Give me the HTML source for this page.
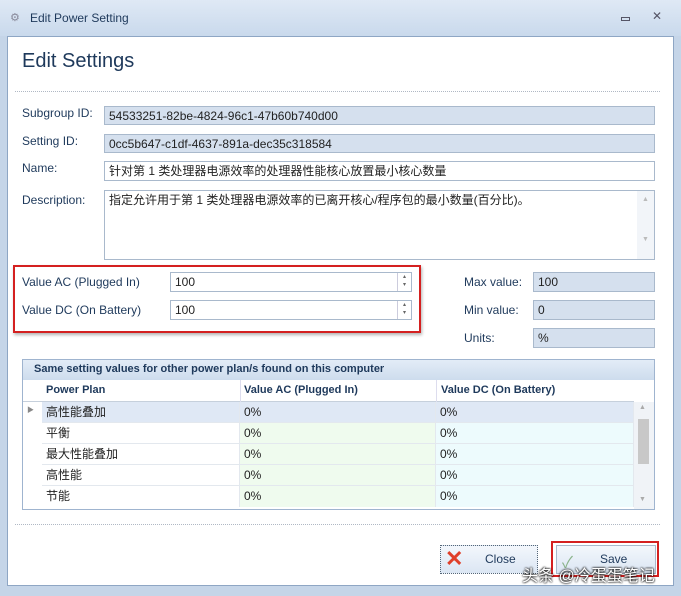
<!DOCTYPE html><html><head><meta charset="utf-8"><style>
*{box-sizing:border-box;margin:0;padding:0}
body{width:681px;height:596px;overflow:hidden;background:#c5d5e8;font-family:"Liberation Sans","Noto Sans CJK SC",sans-serif;font-size:12px;color:#1e395b;position:relative}
.a{position:absolute}
.f{position:absolute;border:1px solid #a9b9cc;padding:2px 4px;font-size:12px;color:#222;line-height:14px}
.g{background:#d5e0ee}
.w{background:#fff}
.l{position:absolute;color:#1e395b;font-size:12px}
.c{position:absolute;height:21px;line-height:21px;border-bottom:1px solid #e3e8ee;border-right:1px solid #e3e8ee;padding-left:4px;color:#222;font-size:12px}
</style></head><body>
<div class="a" style="left:0;top:0;width:681px;height:36px;background:linear-gradient(#dfe9f5,#c9d9ec)"></div>
<div class="a" style="left:10px;top:11px;font-size:11px;color:#889">⚙</div>
<div class="a" style="left:30px;top:11px;font-size:12px;color:#1e395b">Edit Power Setting</div>
<div class="a" style="left:621px;top:12px;width:9px;height:4px;border:1px solid #556;top:17px"></div>
<div class="a" style="left:652px;top:9px;font-size:12px;color:#556">✕</div>
<div class="a" style="left:7px;top:36px;width:667px;height:550px;background:#fff;border:1px solid #8ea6c4"></div>
<div class="a" style="left:22px;top:50px;font-size:20px;color:#1e395b">Edit Settings</div>
<div class="a" style="left:15px;top:91px;width:645px;border-top:1px dotted #b0b8c4"></div>
<div class="l" style="left:22px;top:106px">Subgroup ID:</div>
<div class="f g" style="left:104px;top:106px;width:551px;height:19px">54533251-82be-4824-96c1-47b60b740d00</div>
<div class="l" style="left:22px;top:134px">Setting ID:</div>
<div class="f g" style="left:104px;top:134px;width:551px;height:19px">0cc5b647-c1df-4637-891a-dec35c318584</div>
<div class="l" style="left:22px;top:161px">Name:</div>
<div class="f w" style="left:104px;top:161px;width:551px;height:20px">针对第 1 类处理器电源效率的处理器性能核心放置最小核心数量</div>
<div class="l" style="left:22px;top:193px">Description:</div>
<div class="f w" style="left:104px;top:190px;width:551px;height:70px">指定允许用于第 1 类处理器电源效率的已离开核心/程序包的最小数量(百分比)。</div>
<div class="a" style="left:637px;top:191px;width:17px;height:68px;background:#f2f5f9;color:#bbb;font-size:7px;text-align:center;line-height:10px;padding-top:4px">▲<br><br><br><br>▼</div>
<div class="a" style="left:13px;top:265px;width:408px;height:68px;border:2px solid #d42020;box-shadow:1px 2px 3px rgba(0,0,0,.3)"></div>
<div class="l" style="left:22px;top:275px">Value AC (Plugged In)</div>
<div class="f w" style="left:170px;top:272px;width:242px;height:20px">100</div>
<div class="a" style="left:397px;top:273px;width:14px;height:18px;border-left:1px solid #ccd;font-size:6px;color:#666;text-align:center;line-height:8px">▴<br>▾</div>
<div class="l" style="left:22px;top:303px">Value DC (On Battery)</div>
<div class="f w" style="left:170px;top:300px;width:242px;height:20px">100</div>
<div class="a" style="left:397px;top:301px;width:14px;height:18px;border-left:1px solid #ccd;font-size:6px;color:#666;text-align:center;line-height:8px">▴<br>▾</div>
<div class="l" style="left:464px;top:275px">Max value:</div>
<div class="f g" style="left:533px;top:272px;width:122px;height:20px">100</div>
<div class="l" style="left:464px;top:303px">Min value:</div>
<div class="f g" style="left:533px;top:300px;width:122px;height:20px">0</div>
<div class="l" style="left:464px;top:331px">Units:</div>
<div class="f g" style="left:533px;top:328px;width:122px;height:20px">%</div>
<div class="a" style="left:22px;top:359px;width:633px;height:151px;border:1px solid #9fb4cf;background:#fff"></div>
<div class="a" style="left:23px;top:360px;width:631px;height:20px;background:linear-gradient(#e3ecf7,#cddced);font-weight:bold;font-size:11px;padding:3px 11px;color:#1e395b">Same setting values for other power plan/s found on this computer</div>
<div class="a" style="left:23px;top:380px;width:611px;height:22px;background:#fff;border-bottom:1px solid #c6d0dc"></div>
<div class="a" style="left:46px;top:384px;font-weight:bold;font-size:11px">Power Plan</div>
<div class="a" style="left:244px;top:384px;font-weight:bold;font-size:11px">Value AC (Plugged In)</div>
<div class="a" style="left:441px;top:384px;font-weight:bold;font-size:11px">Value DC (On Battery)</div>
<div class="a" style="left:240px;top:380px;height:22px;border-left:1px solid #dde"></div>
<div class="a" style="left:436px;top:380px;height:22px;border-left:1px solid #dde"></div>
<div class="a" style="left:27px;top:405px;font-size:7px;color:#888">▶</div>
<div class="c" style="left:42px;top:402px;width:198px;background:#dfe8f5">高性能叠加</div><div class="c" style="left:240px;top:402px;width:196px;background:#dfe8f5">0%</div><div class="c" style="left:436px;top:402px;width:198px;background:#dfe8f5">0%</div>
<div class="c" style="left:42px;top:423px;width:198px">平衡</div><div class="c" style="left:240px;top:423px;width:196px;background:#effbee">0%</div><div class="c" style="left:436px;top:423px;width:198px;background:#edfbfd">0%</div>
<div class="c" style="left:42px;top:444px;width:198px">最大性能叠加</div><div class="c" style="left:240px;top:444px;width:196px;background:#effbee">0%</div><div class="c" style="left:436px;top:444px;width:198px;background:#edfbfd">0%</div>
<div class="c" style="left:42px;top:465px;width:198px">高性能</div><div class="c" style="left:240px;top:465px;width:196px;background:#effbee">0%</div><div class="c" style="left:436px;top:465px;width:198px;background:#edfbfd">0%</div>
<div class="c" style="left:42px;top:486px;width:198px;border-bottom:none">节能</div><div class="c" style="left:240px;top:486px;width:196px;background:#effbee;border-bottom:none">0%</div><div class="c" style="left:436px;top:486px;width:198px;background:#edfbfd;border-bottom:none">0%</div>
<div class="a" style="left:634px;top:402px;width:20px;height:107px;background:#f0f3f7"></div>
<div class="a" style="left:638px;top:419px;width:11px;height:45px;background:#c8c8c8"></div>
<div class="a" style="left:639px;top:404px;font-size:7px;color:#aaa">▲</div>
<div class="a" style="left:639px;top:496px;font-size:7px;color:#aaa">▼</div>
<div class="a" style="left:15px;top:524px;width:645px;border-top:1px dotted #b0b8c4"></div>
<div class="a" style="left:440px;top:545px;width:98px;height:29px;border:1px dotted #567;background:linear-gradient(#f3f7fc,#dbe6f3)"></div>
<div class="a" style="left:445px;top:546px;font-size:22px;color:#e0402a;font-weight:bold">✕</div>
<div class="a" style="left:485px;top:552px;color:#1e395b">Close</div>
<div class="a" style="left:551px;top:541px;width:108px;height:36px;border:2px solid #d42020"></div>
<div class="a" style="left:556px;top:545px;width:100px;height:29px;border:1px solid #a9b9cc;background:linear-gradient(#f3f7fc,#dbe6f3)"></div>
<div class="a" style="left:562px;top:549px;font-size:16px;color:#8ab38a">✓</div>
<div class="a" style="left:600px;top:552px;color:#1e395b">Save</div>
<div class="a" style="left:522px;top:562px;font-size:16px;color:#fff;text-shadow:0 0 2px #000,0 0 2px #000">头条 @冷蛋蛋笔记</div>
</body></html>
